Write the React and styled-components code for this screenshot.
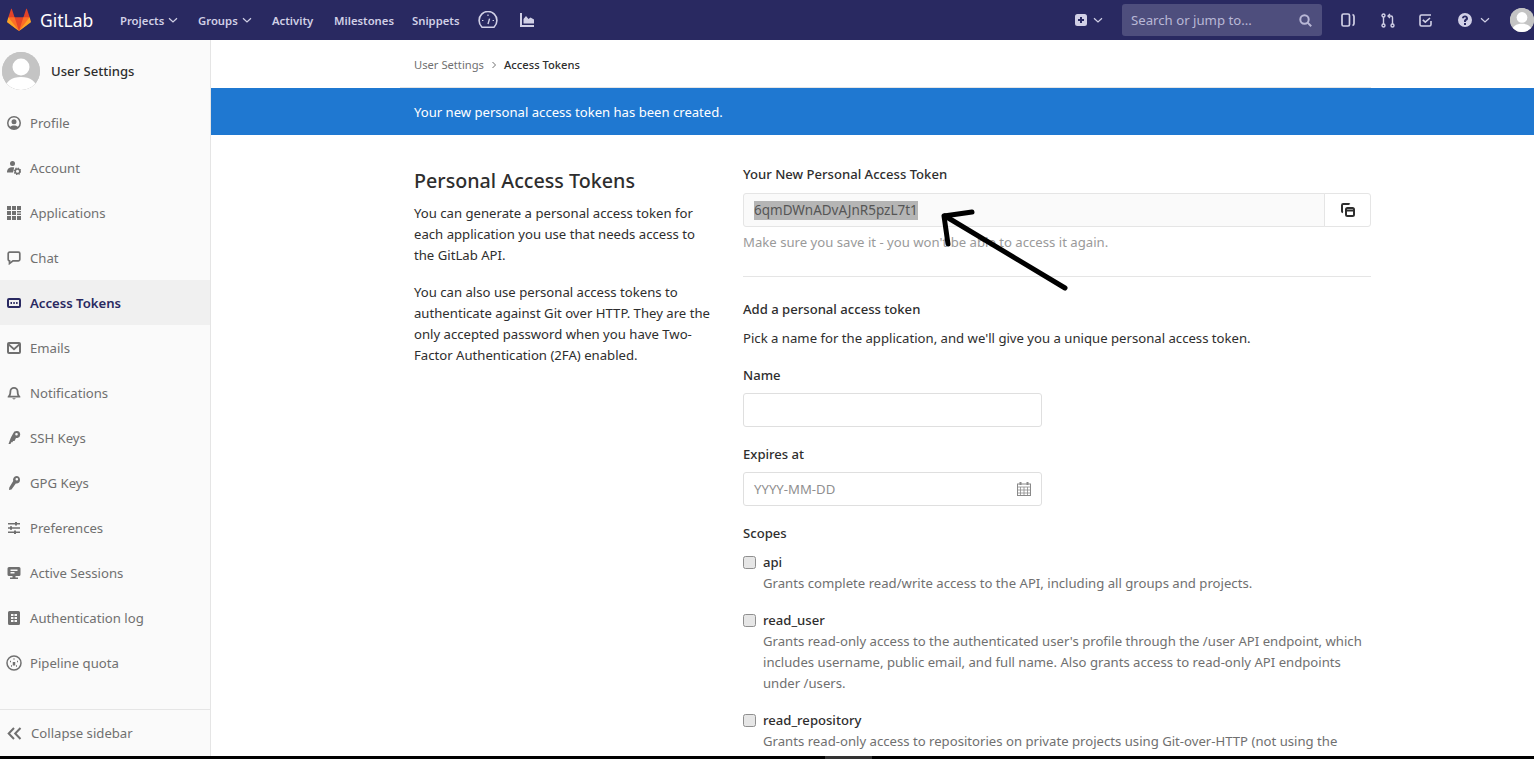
import React from "react";
import styled, { createGlobalStyle } from "styled-components";

const FONT = `"Noto Sans", "Open Sans", "Liberation Sans", sans-serif`;

const GlobalStyle = createGlobalStyle`
  html, body {
    margin: 0;
    padding: 0;
    height: 100%;
    overflow: hidden;
    background: #fff;
  }
  * { box-sizing: border-box; }
  body {
    font-family: ${FONT};
    font-size: 13.15px;
    color: #2e2e2e;
  }
`;

const Page = styled.div`
  position: relative;
  width: 1534px;
  height: 759px;
  display: flex;
  flex-direction: column;
  overflow: hidden;
`;

/* top bar */
const Navbar = styled.header`
  height: 40px;
  flex: none;
  background: #292961;
  display: flex;
  align-items: center;
  color: #d1d0e6;
`;

const Logo = styled.div`
  display: flex;
  align-items: center;
  padding-left: 7px;
  width: 120px;
  flex: none;
  color: #fff;
  font-size: 17.5px;
  svg { margin-right: 9px; }
`;

const NavItem = styled.a`
  display: flex;
  align-items: center;
  font-size: 11.3px;
  font-weight: 600;
  padding-top: 1px;
  color: #d1d0e6;
  width: ${(p) => p.$w}px;
  flex: none;
  svg { margin-left: 4px; margin-top: -1px; }
`;

const NavIcon = styled.span`
  display: flex;
  align-items: center;
  flex: none;
  margin-left: ${(p) => p.$ml || 0}px;
  color: #d1d0e6;
`;

const Spacer = styled.div`
  flex: 1;
`;

const SearchBox = styled.div`
  width: 200px;
  height: 32px;
  flex: none;
  margin-left: 19px;
  border-radius: 3px;
  background: #4e4e7d;
  color: #b9b8d6;
  font-size: 13.2px;
  display: flex;
  align-items: center;
  justify-content: space-between;
  padding: 0 10px 0 9px;
`;

const TopAvatar = styled.div`
  width: 24px;
  height: 24px;
  flex: none;
  margin-left: 20px;
  border-radius: 50%;
  overflow: hidden;
  background: #c4c4c4;
`;

/* layout */
const Body = styled.div`
  flex: 1;
  min-height: 0;
  display: flex;
`;

const Sidebar = styled.aside`
  width: 211px;
  flex: none;
  background: #fafafa;
  border-right: 1px solid #e5e5e5;
  display: flex;
  flex-direction: column;
`;

const SidebarHead = styled.div`
  height: 60px;
  display: flex;
  align-items: center;
  padding: 2px 0 0 2px;
  font-weight: 500;
  font-size: 13.1px;
  color: #2e2e2e;
`;

const AvatarCircle = styled.div`
  width: 38px;
  height: 38px;
  border-radius: 50%;
  overflow: hidden;
  background: #c4c4c4;
  margin-right: 11px;
`;

const SideNav = styled.nav`
  flex: 1;
`;

const SideLink = styled.a`
  height: 45px;
  display: flex;
  align-items: center;
  font-size: 13.15px;
  color: ${(p) => (p.$active ? "#292961" : "#707070")};
  font-weight: ${(p) => (p.$active ? 600 : 400)};
  background: ${(p) => (p.$active ? "#f0f0f0" : "transparent")};
`;

const IconSlot = styled.span`
  width: 14px;
  margin: 0 9px 0 7px;
  flex: none;
  display: flex;
  justify-content: center;
  svg { flex: none; }
`;

const CollapseRow = styled.div`
  height: 47px;
  flex: none;
  border-top: 1px solid #e5e5e5;
  display: flex;
  align-items: center;
  padding-left: 7px;
  font-size: 13.15px;
  color: #707070;
  svg { margin-right: 9px; }
`;

const Main = styled.main`
  flex: 1;
  min-width: 0;
  overflow: hidden;
`;

const Breadcrumbs = styled.div`
  height: 48px;
  margin-left: 189px;
  width: 971px;
  padding: 2px 0 0 14px;
  border-bottom: 1px solid #e5e5e5;
  display: flex;
  align-items: center;
  font-size: 11.2px;
  color: #707070;
  svg { margin: 0 7px; }
`;

const CrumbCurrent = styled.span`
  color: #2e2e2e;
  font-weight: 500;
`;

const Flash = styled.div`
  height: 47px;
  background: #1f78d1;
  color: #fff;
  font-size: 13.1px;
  display: flex;
  align-items: center;
  padding-left: 203px;
`;

const Columns = styled.div`
  display: flex;
  padding: 29px 0 0 203px;
`;

const LeftCol = styled.section`
  width: 329px;
  flex: none;
  padding: 4px 28px 0 0;
`;

const Title = styled.h4`
  margin: 1px 0 10px;
  font-size: 19.7px;
  line-height: 24px;
  font-weight: 500;
  color: #2e2e2e;
`;

const Para = styled.p`
  margin: 0 0 ${(p) => p.$mb ?? 16}px;
  font-size: 13.15px;
  line-height: 21px;
  color: #2e2e2e;
`;

const RightCol = styled.section`
  width: 628px;
  flex: none;
`;

const Label = styled.div`
  font-size: 13.1px;
  line-height: 21px;
  font-weight: 500;
  color: #2e2e2e;
  margin-top: ${(p) => p.$mt || 0}px;
  margin-bottom: ${(p) => p.$mb ?? 7}px;
`;

const TokenGroup = styled.div`
  display: flex;
  height: 34px;
  margin-top: 8px;
`;

const TokenField = styled.div`
  flex: 1;
  background: #fafafa;
  border: 1px solid #e5e5e5;
  border-radius: 3px 0 0 3px;
  padding-left: 10px;
  display: flex;
  align-items: center;
  font-size: 13.5px;
  color: #555;
`;

const Selected = styled.span`
  background: #b5b5b5;
  line-height: 19px;
`;

const CopyButton = styled.div`
  width: 47px;
  flex: none;
  margin-left: -1px;
  border: 1px solid #e5e5e5;
  border-radius: 0 3px 3px 0;
  background: #fff;
  display: flex;
  align-items: center;
  justify-content: center;
  color: #2e2e2e;
`;

const HelpText = styled.div`
  margin-top: 5px;
  font-size: 13.15px;
  line-height: 21px;
  color: #9a9a9a;
`;

const Rule = styled.hr`
  border: 0;
  border-top: 1px solid #e5e5e5;
  margin: 23px 0 22px;
`;

const TextField = styled.div`
  width: 299px;
  height: 34px;
  border: 1px solid #dfdfdf;
  border-radius: 3px;
  background: #fff;
  display: flex;
  align-items: center;
  justify-content: space-between;
  padding: 0 10px;
  font-size: 13.15px;
  color: #8f8f8f;
`;

const Scope = styled.div`
  display: grid;
  grid-template-columns: 20px 1fr;
  margin-bottom: 16px;
`;

const Checkbox = styled.span`
  width: 13px;
  height: 13px;
  margin-top: 4px;
  border: 1px solid #8f8f8f;
  border-radius: 2.5px;
  background: #e6e6e6;
`;

const ScopeName = styled.div`
  font-size: 13.1px;
  line-height: 21px;
  font-weight: 500;
  color: #2e2e2e;
`;

const ScopeText = styled.div`
  grid-column: 2;
  font-size: 13.15px;
  line-height: 21px;
  color: #707070;
`;

const BottomEdge = styled.div`
  height: 3px;
  flex: none;
  background: #000;
  padding-left: 825px;
`;

const BottomThumb = styled.div`
  width: 47px;
  height: 100%;
  background: #333;
`;

const ArrowOverlay = styled.svg`
  position: absolute;
  left: 0;
  top: 0;
  pointer-events: none;
`;

/* icons */
const Svg = ({ size = 16, vb = "0 0 16 16", children }) => (
  <svg width={size} height={size} viewBox={vb} fill="currentColor">
    {children}
  </svg>
);

const Chevron = () => (
  <svg width="10" height="10" viewBox="0 0 10 10" fill="none" stroke="currentColor" strokeWidth="1.2">
    <path d="M1 3.2 5 7l4-3.8" />
  </svg>
);

const Tanuki = () => (
  <svg width="24" height="24" viewBox="0 0 36 36">
    <path fill="#e24329" d="M2 14l9.38 9v-9l-4-12.28c-.205-.632-1.176-.632-1.38 0z" />
    <path fill="#e24329" d="M34 14l-9.38 9v-9l4-12.28c.205-.632 1.176-.632 1.38 0z" />
    <path fill="#e24329" d="M18 34.38 3 14h30z" />
    <path fill="#fc6d26" d="M18 34.38 11.38 14H2l4 11z" />
    <path fill="#fc6d26" d="M18 34.38 24.62 14H34l-4 11z" />
    <path fill="#fca326" d="M2 14 .1 20.16c-.18.565 0 1.2.5 1.56l17.42 12.66z" />
    <path fill="#fca326" d="M34 14l1.9 6.16c.18.565 0 1.2-.5 1.56L18 34.38z" />
  </svg>
);

const Gauge = () => (
  <svg width="20" height="18" viewBox="0 0 20 18" fill="none" stroke="currentColor" strokeWidth="1.6">
    <path d="M4 16.2h12c1.6-1.6 2.9-4 2.9-6.8A8.9 8.9 0 0 0 1.1 9.4c0 2.8 1.3 5.2 2.9 6.8z" />
    <path d="M10 13 11.6 7.6" strokeWidth="1.4" />
    <path d="M4 9.5h1.4M14.6 9.5H16M10 3.6V5" strokeWidth="1.2" />
  </svg>
);

const BarChart = () => (
  <Svg size={14} vb="0 0 14 14">
    <path d="M0 0h2v12h12v2H0z" />
    <path d="M3.5 10.5V6l2.5-3 2.5 3 2-1.5 3.5 2v4z" />
  </Svg>
);

const PlusSquare = () => (
  <Svg size={12} vb="0 0 12 12">
    <path fillRule="evenodd" d="M2.5 0h7A2.5 2.5 0 0 1 12 2.5v7A2.5 2.5 0 0 1 9.500 12h-7A2.500 2.500 0 0 1 0 9.500v-7A2.500 2.500 0 0 1 2.500 0zM5 3v2H3v2h2v2h2V7h2V5H7V3z" />
  </Svg>
);

const SearchGlyph = () => (
  <svg width="13" height="13" viewBox="0 0 13 13" fill="none" stroke="currentColor" strokeWidth="2">
    <circle cx="5.500" cy="5.500" r="4.200" />
    <path d="m8.600 8.600 3.600 3.600" />
  </svg>
);

const IssuesGlyph = () => (
  <svg width="14" height="14" viewBox="0 0 14 14" fill="none" stroke="currentColor" strokeWidth="1.700">
    <rect x="1" y="1" width="7.500" height="12" rx="1.500" />
    <path d="M11.500 1.500c1 .3 1.500 1 1.500 2v7c0 1-.5 1.700-1.500 2" />
  </svg>
);

const MergeGlyph = () => (
  <svg width="14" height="15" viewBox="0 0 14 15" fill="none" stroke="currentColor" strokeWidth="1.400">
    <circle cx="2.500" cy="2.500" r="1.500" />
    <circle cx="2.500" cy="12.500" r="1.500" />
    <circle cx="11.500" cy="12.500" r="1.500" />
    <path d="M2.500 4v7M11.500 11V4.500c0-1-.5-1.500-1.500-1.500H7.500" />
    <path d="M9 1 7 3l2 2" />
  </svg>
);

const TodoGlyph = () => (
  <svg width="13" height="13" viewBox="0 0 13 13" fill="none" stroke="currentColor" strokeWidth="1.600">
    <path d="M12 1H2.500A1.500 1.500 0 0 0 1 2.500v8A1.500 1.500 0 0 0 2.500 12h8a1.500 1.500 0 0 0 1.500-1.500V7" />
    <path d="m3.800 5.800 2.500 2.400L11 4" />
  </svg>
);

const HelpGlyph = () => (
  <Svg size={14} vb="0 0 14 14">
    <path fillRule="evenodd" d="M7 0a7 7 0 1 1 0 14A7 7 0 0 1 7 0zM6 10v2h2v-2zM7 2.500c-1.700 0-3 1-3 2.700h2c0-.6.4-1 1-1s1 .3 1 .9c0 .4-.3.7-.8 1C6.300 6.700 6 7.300 6 8.200V9h2v-.6c0-.4.2-.6.700-.9.800-.5 1.300-1.200 1.300-2.100 0-1.800-1.300-2.900-3-2.900z" />
  </Svg>
);

const AvatarFace = () => (
  <svg width="100%" height="100%" viewBox="0 0 38 38">
    <rect width="38" height="38" fill="#c4c4c4" />
    <circle cx="19" cy="15" r="8.500" fill="#fff" />
    <path d="M3 38c0-9 7-13 16-13s16 4 16 13z" fill="#fff" />
  </svg>
);

const icons = {
  profile: (
    <Svg size={14} vb="0 0 14 14">
      <path fillRule="evenodd" d="M7 0a7 7 0 1 1 0 14A7 7 0 0 1 7 0zm0 1.600A5.400 5.400 0 0 0 3.200 10.800C4.200 9.900 5.500 9.500 7 9.500s2.800.4 3.800 1.300A5.400 5.400 0 0 0 7 1.600zM7 3.300a2.500 2.500 0 1 1 0 5 2.500 2.500 0 0 1 0-5z" />
    </Svg>
  ),
  account: (
    <svg width="14" height="14" viewBox="0 0 14 14" fill="currentColor">
      <circle cx="5.500" cy="2.500" r="2.500" />
      <path d="M0 11.500C0 8 2 6.200 5.500 6.200c.7 0 1.200.1 1.700.2L6 11.500z" />
      <circle cx="10.500" cy="10.300" r="2.300" fill="none" stroke="currentColor" strokeWidth="1.500" />
      <circle cx="10.500" cy="10.300" r="3.200" fill="none" stroke="currentColor" strokeWidth="1.300" strokeDasharray="1.300 1.200" />
    </svg>
  ),
  applications: (
    <Svg size={14} vb="0 0 14 14">
      <path d="M0 0h4v4H0zM5 0h4v4H5zM10 0h4v4h-4zM0 5h4v4H0zM5 5h4v4H5zM10 5h4v1.500h-4zM10 7.500h4V9h-4zM0 10h4v4H0zM5 10h4v4H5zM10 10h4v4h-4z" />
    </Svg>
  ),
  chat: (
    <svg width="14" height="14" viewBox="0 0 14 14" fill="none" stroke="currentColor" strokeWidth="1.700">
      <path d="M2.500 1.200h9c.7 0 1.300.6 1.300 1.300v6c0 .7-.6 1.300-1.300 1.300H6L2.500 12.500v-2.700c-.7 0-1.300-.6-1.300-1.300v-6c0-.7.6-1.300 1.300-1.300z" />
    </svg>
  ),
  token: (
    <Svg size={14} vb="0 0 14 14">
      <path fillRule="evenodd" d="M2 2h10a2 2 0 0 1 2 2v6a2 2 0 0 1-2 2H2a2 2 0 0 1-2-2V4a2 2 0 0 1 2-2zm0 2v6h10V4zm1.500 2h1.500v2H3.500zm2.800 0h1.500v2H6.300zm2.800 0h1.500v2H9.100z" />
    </Svg>
  ),
  email: (
    <Svg size={14} vb="0 0 14 14">
      <path fillRule="evenodd" d="M2 1h10a2 2 0 0 1 2 2v8a2 2 0 0 1-2 2H2a2 2 0 0 1-2-2V3a2 2 0 0 1 2-2zm.500 2L7 7l4.500-4zM2 5v6h10V5L7 9.500z" />
    </Svg>
  ),
  bell: (
    <Svg size={14} vb="0 0 14 14">
      <path fillRule="evenodd" d="M7 1a4.500 4.500 0 0 1 4.500 4.500c0 2.500.7 3.800 1.800 5 .3.400.1 1-.5 1H1.200c-.6 0-.8-.6-.5-1 1.100-1.200 1.800-2.500 1.800-5A4.500 4.500 0 0 1 7 1zm0 1.800a2.700 2.700 0 0 0-2.700 2.700c0 1.600-.3 3-.8 4.200h7c-.5-1.200-.8-2.600-.8-4.200A2.700 2.700 0 0 0 7 2.800z" />
      <path d="M5.300 12.300h3.400c-.2.700-.9 1.200-1.700 1.200s-1.500-.5-1.700-1.200z" />
    </Svg>
  ),
  ssh: (
    <Svg size={14} vb="0 0 14 14">
      <path fillRule="evenodd" d="M9.500 0a3.500 3.500 0 0 1 1 6.900C9.900 7.100 9.400 7.100 9 7L7.500 10H6l-.5 1.300H4.200L3.500 13H1.500l2-5.500c.2-.5.5-.9.700-1.400L6.100 2.400A3.600 3.600 0 0 1 9.500 0zm0 2a1.300 1.300 0 1 0 0 2.600 1.300 1.300 0 0 0 0-2.600z" />
    </Svg>
  ),
  gpg: (
    <Svg size={14} vb="0 0 14 14">
      <path fillRule="evenodd" d="M9.500 0a3.800 3.800 0 0 1 .5 7.500L8.800 7.400 4.500 13.500 2 14l.3-2.500 3.900-6.500A3.800 3.800 0 0 1 9.500 0zm.3 2a1.300 1.300 0 1 0 0 2.600 1.300 1.300 0 0 0 0-2.600z" />
    </Svg>
  ),
  preferences: (
    <Svg size={14} vb="0 0 14 14">
      <path d="M1 2h7V1h2v1h3v1.500h-3v1H8v-1H1zM1 6.300h2v-1h2v1h8v1.500H5v1H3v-1H1zM1 10.500h6v-1h2v1h4V12H9v1H7v-1H1z" />
    </Svg>
  ),
  sessions: (
    <Svg size={14} vb="0 0 14 14">
      <path fillRule="evenodd" d="M2 1h10a1.500 1.500 0 0 1 1.500 1.500v6A1.500 1.500 0 0 1 12 10H8.500v1.500H11V13H3v-1.500h2.500V10H2A1.500 1.500 0 0 1 .5 8.500v-6A1.500 1.500 0 0 1 2 1zm1.500 2.500V5h7V3.500zm0 2.500v1.500h4V6z" />
    </Svg>
  ),
  log: (
    <Svg size={14} vb="0 0 14 14">
      <path fillRule="evenodd" d="M2.500 0h9A1.500 1.500 0 0 1 13 1.500v11a1.500 1.500 0 0 1-1.500 1.500h-9A1.500 1.500 0 0 1 1 12.500v-11A1.500 1.500 0 0 1 2.500 0zM4 3v2h2.500V3zm3.500 0v2H10V3zM4 6v2h2.500V6zm3.500 0v2H10V6zM4 9v2h2.500V9zm3.500 0v2H10V9z" />
    </Svg>
  ),
  quota: (
    <svg width="16" height="16" viewBox="0 0 16 16" fill="none" stroke="currentColor">
      <circle cx="8" cy="8" r="7" strokeWidth="1.500" />
      <path d="M8 7v3.500" strokeWidth="2.500" />
      <path d="M4 6.500h1M11 6.500h1M8 3.500v1M5 11h1M10 11h1" strokeWidth="1.500" />
    </svg>
  ),
};

const Copy = () => (
  <svg width="14" height="14" viewBox="0 0 14 14" fill="none" stroke="currentColor" strokeWidth="2">
    <path d="M8.500 1.500a1 1 0 0 0-.8-.5H2.200C1.500 1 1 1.500 1 2.200v6c0 .7.400 1 1 1.200" />
    <rect x="5" y="5" width="8" height="8" rx="1.500" />
    <path d="M5 7.500h8" />
  </svg>
);

const Calendar = () => (
  <svg width="14" height="14" viewBox="0 0 14 14" fill="none" stroke="#8a8a8a" strokeWidth="1">
    <rect x=".5" y="2" width="13" height="11.500" />
    <path d="M.5 5h13M.5 8h13M.5 11h13M3.500 5v8.500M7 5v8.500M10.500 5v8.500" strokeWidth=".8" />
    <path d="M3.500 0v3M10.500 0v3" strokeWidth="2" />
  </svg>
);

const Crumb = () => (
  <svg width="6" height="8" viewBox="0 0 6 8" fill="none" stroke="#707070" strokeWidth="1">
    <path d="m1.500 1 3 3-3 3" />
  </svg>
);

const Collapse = () => (
  <svg width="15" height="13" viewBox="0 0 15 13" fill="none" stroke="currentColor" strokeWidth="2">
    <path d="M7 1 1.700 6.500 7 12M13.500 1 8.200 6.500 13.500 12" />
  </svg>
);

const sideItems = [
  ["profile", "Profile"],
  ["account", "Account"],
  ["applications", "Applications"],
  ["chat", "Chat"],
  ["token", "Access Tokens", true],
  ["email", "Emails"],
  ["bell", "Notifications"],
  ["ssh", "SSH Keys"],
  ["gpg", "GPG Keys"],
  ["preferences", "Preferences"],
  ["sessions", "Active Sessions"],
  ["log", "Authentication log"],
  ["quota", "Pipeline quota"],
];

export default function App() {
  return (
    <Page>
      <GlobalStyle />
      <Navbar>
        <Logo>
          <Tanuki />
          GitLab
        </Logo>
        <NavItem $w={78}>Projects <Chevron /></NavItem>
        <NavItem $w={74}>Groups <Chevron /></NavItem>
        <NavItem $w={62}>Activity</NavItem>
        <NavItem $w={78}>Milestones</NavItem>
        <NavItem $w={66}>Snippets</NavItem>
        <NavIcon><Gauge /></NavIcon>
        <NavIcon $ml={22}><BarChart /></NavIcon>
        <Spacer />
        <NavIcon><PlusSquare /></NavIcon>
        <NavIcon $ml={6}><Chevron /></NavIcon>
        <SearchBox>
          Search or jump to...
          <SearchGlyph />
        </SearchBox>
        <NavIcon $ml={19}><IssuesGlyph /></NavIcon>
        <NavIcon $ml={26}><MergeGlyph /></NavIcon>
        <NavIcon $ml={24}><TodoGlyph /></NavIcon>
        <NavIcon $ml={26}><HelpGlyph /></NavIcon>
        <NavIcon $ml={8}><Chevron /></NavIcon>
        <TopAvatar><AvatarFace /></TopAvatar>
      </Navbar>
      <Body>
        <Sidebar>
          <SidebarHead>
            <AvatarCircle><AvatarFace /></AvatarCircle>
            User Settings
          </SidebarHead>
          <SideNav>
            {sideItems.map(([icon, label, active]) => (
              <SideLink key={label} $active={active}>
                <IconSlot>{icons[icon]}</IconSlot>
                {label}
              </SideLink>
            ))}
          </SideNav>
          <CollapseRow>
            <Collapse />
            Collapse sidebar
          </CollapseRow>
        </Sidebar>
        <Main>
          <Breadcrumbs>
            User Settings
            <Crumb />
            <CrumbCurrent>Access Tokens</CrumbCurrent>
          </Breadcrumbs>
          <Flash>Your new personal access token has been created.</Flash>
          <Columns>
            <LeftCol>
              <Title>Personal Access Tokens</Title>
              <Para>You can generate a personal access token for each application you use that needs access to the GitLab API.</Para>
              <Para $mb={0}>You can also use personal access tokens to authenticate against Git over HTTP. They are the only accepted password when you have Two-Factor Authentication (2FA) enabled.</Para>
            </LeftCol>
            <RightCol>
              <Label $mb={0}>Your New Personal Access Token</Label>
              <TokenGroup>
                <TokenField><Selected>6qmDWnADvAJnR5pzL7t1</Selected></TokenField>
                <CopyButton><Copy /></CopyButton>
              </TokenGroup>
              <HelpText>Make sure you save it - you won't be able to access it again.</HelpText>
              <Rule />
              <Label $mb={8}>Add a personal access token</Label>
              <Para>Pick a name for the application, and we'll give you a unique personal access token.</Para>
              <Label>Name</Label>
              <TextField />
              <Label $mt={17}>Expires at</Label>
              <TextField>
                YYYY-MM-DD
                <Calendar />
              </TextField>
              <Label $mt={17} $mb={8}>Scopes</Label>
              <Scope>
                <Checkbox />
                <ScopeName>api</ScopeName>
                <ScopeText>Grants complete read/write access to the API, including all groups and projects.</ScopeText>
              </Scope>
              <Scope>
                <Checkbox />
                <ScopeName>read_user</ScopeName>
                <ScopeText>Grants read-only access to the authenticated user's profile through the /user API endpoint, which includes username, public email, and full name. Also grants access to read-only API endpoints under /users.</ScopeText>
              </Scope>
              <Scope>
                <Checkbox />
                <ScopeName>read_repository</ScopeName>
                <ScopeText>Grants read-only access to repositories on private projects using Git-over-HTTP (not using the</ScopeText>
              </Scope>
            </RightCol>
          </Columns>
        </Main>
      </Body>
      <BottomEdge><BottomThumb /></BottomEdge>
      <ArrowOverlay width="1534" height="759" viewBox="0 0 1534 759" fill="none" stroke="#000" strokeWidth="5" strokeLinecap="round" strokeLinejoin="round">
        <path d="M1065 288 945 216" />
        <path d="M972 212 944 216 948 244" />
      </ArrowOverlay>
    </Page>
  );
}
